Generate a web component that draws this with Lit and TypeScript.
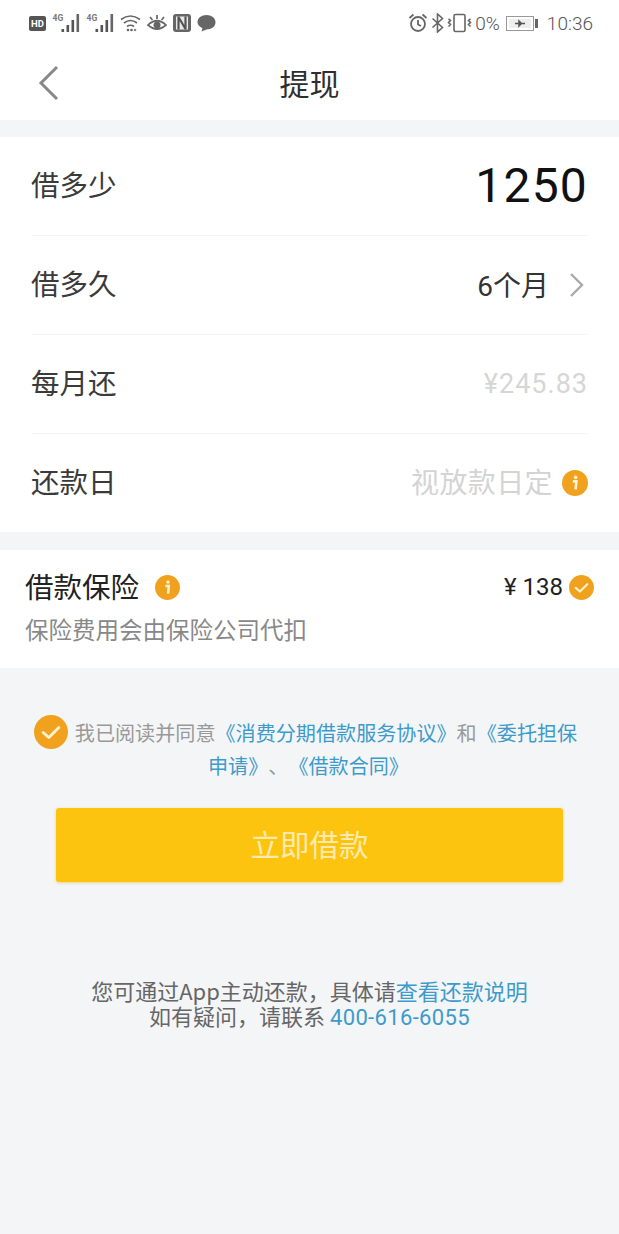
import { LitElement, html, css, svg } from "lit";
import { customElement } from "lit/decorators.js";

const info = (cls: string) => html`<svg class=${cls} viewBox="0 0 26 26"><circle cx="13" cy="13" r="13" fill="#f0a21e"/><circle cx="13.6" cy="7.4" r="1.8" fill="#fff2cf"/><path d="M10.800 11.400h3.600l-.8 8" fill="none" stroke="#fff2cf" stroke-width="2.600"/></svg>`;
const check = (cls: string) => html`<svg class=${cls} viewBox="0 0 26 26"><circle cx="13" cy="13" r="13" fill="#f0a21e"/><path d="M7 13.4l4.4 3.8L19 9.6" fill="none" stroke="#fff2cf" stroke-width="2.2" stroke-linecap="round" stroke-linejoin="round"/></svg>`;
const signal = svg`<text x="0" y="7" font-size="8.500" font-family="Roboto" font-weight="700" fill="#777">4G</text><rect x="9" y="15" width="2.600" height="3" fill="#555"/><rect x="14" y="11" width="2.600" height="7" fill="#555"/><rect x="19" y="6" width="2.600" height="12" fill="#555"/><rect x="24" y="0" width="2.600" height="18" fill="#666"/>`;

@customElement("app-root")
export class AppRoot extends LitElement {
  static styles = css`
    :host { display: block; width: 619px; height: 1234px; overflow: hidden; background: #f4f5f7; font-family: "Noto Sans CJK SC", "Noto Sans", sans-serif; color: #333; text-spacing-trim: space-all; }
    .top { background: #fff; height: 120px; display: flex; flex-direction: column; }
    .status { height: 46px; display: flex; justify-content: space-between; align-items: center; padding: 0 26px 0 29px; color: #666; }
    .s-left, .s-right { display: flex; align-items: center; }
    .s-left { gap: 6px; }
    .s-right { gap: 3px; font: 300 19px Roboto, sans-serif; color: #555; }
    .hd { width: 17px; height: 15px; background: #555; border-radius: 2px; color: #fff; font: 700 9.500px/15px Roboto, sans-serif; text-align: center; }
    .nav { flex: 1; position: relative; display: flex; align-items: center; justify-content: center; }
    .nav h1 { margin: 0; font-size: 30px; font-weight: 400; color: #2e2e2e; line-height: 40px; padding-bottom: 3px; }
    .back { position: absolute; left: 38px; top: 19px; width: 22px; height: 36px; }
    .card { background: #fff; margin-top: 17px; padding: 0 32px; height: 395px; box-sizing: border-box; display: flex; flex-direction: column; }
    .row { height: 99px; flex: none; display: flex; align-items: center; justify-content: space-between; border-bottom: 1px solid #f4f4f4; box-sizing: border-box; font-size: 28.500px; color: #3a3a3a; }
    .row:last-child { border-bottom: 0; height: 98px; }
    .lab { position: relative; top: -3px; margin-left: -1px; }
    .amount { font: 400 48px Roboto, sans-serif; letter-spacing: 1.2px; color: #111; margin-right: -1px; position: relative; top: -1px; }
    .val { display: flex; align-items: center; font-size: 28px; }
    .val .n { font-family: Roboto, "Noto Sans CJK SC", sans-serif; color: #333; position: relative; top: -1px; }
    .chev { width: 16px; height: 26px; margin-left: 20px; margin-right: 2px; }
    .money { font: 27px Roboto, sans-serif; letter-spacing: 1px; color: #d6d6d6; margin-right: -1px; }
    .muted { color: #d4d4d4; letter-spacing: 0.4px; position: relative; top: -2px; }
    .i1 { width: 26px; height: 26px; margin-left: 9px; margin-right: -1px; }
    .ins { background: #fff; margin-top: 18px; height: 118px; padding: 0 25px; box-sizing: border-box; display: flex; flex-direction: column; }
    .ins-top { display: flex; align-items: center; justify-content: space-between; height: 58px; margin-top: 8px; }
    .ins-l { display: flex; align-items: center; font-size: 28.500px; color: #222; }
    .ins-l span { position: relative; top: -2px; }
    .ins-l svg { width: 25px; height: 25px; margin-left: 16px; }
    .ins-r { display: flex; align-items: center; font: 24px Roboto, sans-serif; color: #222; gap: 6px; }
    .ins-r svg { width: 25px; height: 25px; }
    .ins-sub { font-size: 23.500px; line-height: 26px; color: #888; }
    .agree { margin-top: 47px; padding: 0 40px 0 32px; color: #999; font-size: 20.100px; line-height: 33px; text-align: center; }
    .ck-inline { width: 34px; height: 34px; margin-right: 7px; vertical-align: -8px; }
    .line2 { margin-left: 6px; }
    a { color: #3d9bcb; text-decoration: none; }
    .btn { margin: 26px 56px 0; height: 74px; padding-bottom: 4px; box-sizing: border-box; background: #fdc40f; border-radius: 3px; color: #fdeab0; font-size: 29.500px; display: flex; align-items: center; justify-content: center; box-shadow: 0 1px 3px rgba(230,180,40,.5); }
    .foot { margin-top: 96px; text-align: center; font-size: 22px; line-height: 25px; color: #666; }
    .foot .tel { font-family: Roboto, "Noto Sans CJK SC", sans-serif; letter-spacing: .35px; }
  `;

  render() {
    return html`
      <div class="top">
        <div class="status">
          <div class="s-left">
            <span class="hd">HD</span>
            <svg width="28" height="18" viewBox="0 0 27 18">${signal}</svg>
            <svg width="28" height="18" viewBox="0 0 27 18">${signal}</svg>
            <svg width="21" height="18" viewBox="0 0 21 18" fill="none" stroke="#666" stroke-width="1.700"><path d="M1 5.500q9.500-7 19 0M4 9q6.500-5 13 0M7 12.500q3.500-2.500 7 0"/><circle cx="8" cy="16" r="1.300" fill="#666" stroke="none"/><circle cx="11.500" cy="16" r="1.300" fill="#666" stroke="none"/><circle cx="15" cy="16" r="1.300" fill="#888" stroke="none"/></svg>
            <svg width="20" height="18" viewBox="0 0 20 18" fill="none" stroke="#666" stroke-width="1.700"><path d="M1 11q9-8.500 18 0q-9 8-18 0z"/><circle cx="10" cy="11" r="2.700" fill="#666"/><path d="M3 3l2.500 3M10 1v4M17 3l-2.500 3"/></svg>
            <svg width="18" height="18" viewBox="0 0 18 18"><rect x="0" y="0" width="18" height="18" rx="3" fill="#666"/><rect x="3" y="2.500" width="12" height="13" fill="#e8e8e8"/><path d="M5.500 2.500v13M5.500 3l7 12M12.500 2.500v13" stroke="#555" stroke-width="2.200" fill="none"/></svg>
            <svg width="19" height="18" viewBox="0 0 19 18"><path d="M9.500 1c5 0 9 3 9 7.300s-4 7.200-9 7.200l-5 2 1-3.200C2.600 12.900.5 10.900.5 8.300c0-4.300 4-7.300 9-7.300z" fill="#666"/></svg>
          </div>
          <div class="s-right">
            <svg width="20" height="20" viewBox="0 0 20 20" fill="none" stroke="#666" stroke-width="1.800"><circle cx="10" cy="11" r="7"/><path d="M10 7v4.500l3 1.500M1.500 5l4-3.500M18.500 5l-4-3.500"/></svg>
            <svg width="13" height="20" viewBox="0 0 12 20" fill="none" stroke="#666" stroke-width="1.600"><path d="M1 5.500l10 9-5 4.500V1l5 4.500-10 9"/></svg>
            <svg width="25" height="20" viewBox="0 0 25 20" fill="none" stroke="#666" stroke-width="1.600"><rect x="7" y="1.500" width="11" height="17" rx="1.500"/><path d="M1.500 6l2 1.500-2 2 2 2-2 2M23.500 6l-2 1.500 2 2-2 2 2 2"/></svg>
            <span>0%</span>
            <svg width="32" height="15" viewBox="0 0 32 15" fill="none" style="margin-left:3px"><rect x=".5" y=".5" width="27" height="14" stroke="#999"/><rect x="3" y="3" width="22" height="9" fill="#eee"/><path d="M9 7.500h10M13 5l2.500 2.500-2.500 2.500z" stroke="#555" stroke-width="1.500"/><rect x="29" y="3" width="3" height="9" fill="#666"/></svg>
            <span style="margin-left:6px">10:36</span>
          </div>
        </div>
        <div class="nav">
          <svg class="back" viewBox="0 0 22 36" fill="none" stroke="#888" stroke-width="3"><path d="M19 2L3 18l16 16"/></svg>
          <h1>提现</h1>
        </div>
      </div>

      <div class="card">
        <div class="row"><span class="lab">借多少</span><span class="amount">1250</span></div>
        <div class="row"><span class="lab">借多久</span><span class="val"><span class="n">6个月</span>
          <svg class="chev" viewBox="0 0 16 26" fill="none" stroke="#aaa" stroke-width="2.400"><path d="M2 2l11 11L2 24"/></svg></span></div>
        <div class="row"><span class="lab">每月还</span><span class="money">¥245.83</span></div>
        <div class="row"><span class="lab">还款日</span><span class="val"><span class="muted">视放款日定</span>${info("i1")}</span></div>
      </div>

      <div class="ins">
        <div class="ins-top">
          <div class="ins-l"><span>借款保险</span>${info("")}</div>
          <div class="ins-r"><span>¥ 138</span>${check("")}</div>
        </div>
        <div class="ins-sub">保险费用会由保险公司代扣</div>
      </div>

      <div class="agree">${check("ck-inline")}我已阅读并同意<a>《消费分期借款服务协议》</a>和<a>《委托担保</a><br /><a class="line2">申请》</a>、<a>《借款合同》</a></div>

      <div class="btn">立即借款</div>

      <div class="foot">您可通过App主动还款，具体请<a>查看还款说明</a><br />如有疑问，请联系 <a class="tel">400-616-6055</a></div>
    `;
  }
}
